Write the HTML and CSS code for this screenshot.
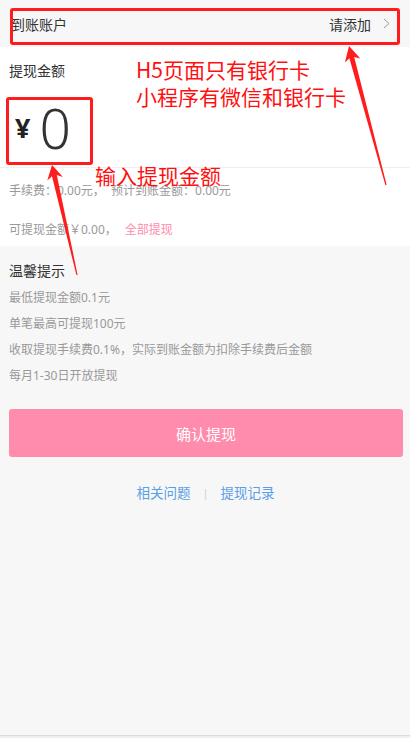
FILE: index.html
```html
<!DOCTYPE html>
<html lang="zh-CN">
<head>
<meta charset="utf-8">
<title>提现</title>
<link rel="stylesheet" href="styles.css">
</head>
<body>
<div class="page">
  <div class="account-row">
    <span class="account-label">到账账户</span>
    <span class="account-add">请添加
      <svg class="chevron" width="7" height="11" viewBox="0 0 7 11"><polyline points="1,1 6,5.5 1,10" fill="none" stroke="#9a9a9a" stroke-width="1"/></svg>
    </span>
  </div>

  <div class="amount-card">
    <div class="amount-title">提现金额</div>
    <div class="amount-row">
      <span class="yen">¥</span>
      <span class="amount-value">0</span>
    </div>
    <div class="fee-line">手续费：0.00元，&nbsp; 预计到账金额：0.00元</div>
    <div class="avail-line">可提现金额￥0.00，<a class="all-link">全部提现</a></div>
  </div>

  <div class="tips">
    <div class="tips-title">温馨提示</div>
    <div class="tip">最低提现金额0.1元</div>
    <div class="tip">单笔最高可提现100元</div>
    <div class="tip">收取提现手续费0.1%，实际到账金额为扣除手续费后金额</div>
    <div class="tip">每月1-30日开放提现</div>
  </div>

  <button class="confirm-btn">确认提现</button>

  <div class="links">
    <a class="link">相关问题</a>
    <span class="sep">|</span>
    <a class="link">提现记录</a>
  </div>

  <div class="spacer"></div>
  <div class="bottom-bar"></div>

  <!-- annotations -->
  <div class="mark mark-account"></div>
  <div class="mark mark-amount"></div>
  <div class="note note-top">H5页面只有银行卡<br>小程序有微信和银行卡</div>
  <div class="note note-amount">输入提现金额</div>
  <svg class="arrows" width="410" height="738" viewBox="0 0 410 738">
    <polygon fill="#ff1c1c" points="349,46 360.3,58.4 354.2,57 386.6,184.8 385.4,185.2 349.4,58.2 344.9,62.6"/>
    <polygon fill="#ff1c1c" points="52,165 62.9,176.9 56.8,175.1 77.6,274.9 76.4,275.1 52,176.3 47.3,180.5"/>
  </svg>
</div>
</body>
</html>
```

FILE: styles.css
```css
* { box-sizing: border-box; }
html, body { margin: 0; padding: 0; }
body {
  background: #f7f7f7;
  font-family: "Noto Sans", "Noto Sans CJK SC", sans-serif;
  color: #333;
}
.page {
  position: relative;
  width: 410px;
  min-height: 738px;
  display: flex;
  flex-direction: column;
  background: #f7f7f7;
}
.account-row {
  height: 47px;
  display: flex;
  align-items: center;
  justify-content: space-between;
  padding: 0 20px 0 11px;
  font-size: 14px;
  background: #f7f7f7;
}
.account-add {
  display: flex;
  align-items: center;
  gap: 12px;
}
.chevron { display: block; }

.amount-card {
  background: #fff;
  padding: 14px 0 6px 9px;
}
.amount-title {
  font-size: 14px;
  line-height: 20px;
}
.amount-row {
  margin-top: 7px;
  height: 80px;
  margin-left: -9px;
  padding-left: 15px;
  display: flex;
  align-items: center;
  border-bottom: 1px solid #efefef;
}
.yen {
  font-size: 27px;
  font-weight: bold;
  line-height: 1;
  margin-right: 9px;
  color: #222;
}
.amount-value {
  font-size: 55px;
  font-weight: 300;
  line-height: 1;
  color: #333;
  font-family: "Noto Sans", "Noto Sans CJK SC", sans-serif;
}
.fee-line {
  margin-top: 13px;
  font-size: 12px;
  line-height: 20px;
  color: #999;
}
.avail-line {
  margin-top: 19px;
  font-size: 12px;
  line-height: 20px;
  color: #999;
}
.all-link {
  color: #ff8cac;
  margin-left: 8px;
}

.tips {
  padding: 15px 9px 0;
}
.tips-title {
  font-size: 14px;
  line-height: 20px;
  color: #333;
  margin-bottom: 4px;
}
.tip {
  font-size: 12px;
  line-height: 26px;
  color: #999;
}

.confirm-btn {
  margin: 20px 7px 0 9px;
  height: 48px;
  border: none;
  border-radius: 3px;
  background: #ff8cac;
  color: #fff;
  font-size: 15px;
  font-family: "Noto Sans", "Noto Sans CJK SC", sans-serif;
}

.links {
  margin-top: 26px;
  display: flex;
  justify-content: center;
  align-items: center;
  gap: 12px;
  font-size: 13.5px;
  line-height: 20px;
  padding-left: 1px;
}
.link { color: #5a9ee8; }
.sep { color: #d0d0d0; font-size: 11px; }

.spacer { flex: 1; }
.bottom-bar {
  height: 3px;
  border-top: 1px solid #dcdcdc;
  background: #efefef;
}

/* annotations */
.mark {
  position: absolute;
  border: 3px solid #ff1c1c;
  border-radius: 3px;
}
.mark-account { left: 10px; top: 8px; width: 390px; height: 37px; }
.mark-amount { left: 6px; top: 97px; width: 87px; height: 68px; }
.note {
  position: absolute;
  color: #ff1010;
  font-family: "Noto Sans CJK SC", sans-serif;
  font-size: 21px;
  line-height: 27px;
}
.note-top { left: 136px; top: 56px; }
.note-amount { left: 95px; top: 162px; }
.arrows {
  position: absolute;
  left: 0;
  top: 0;
  pointer-events: none;
}
```
